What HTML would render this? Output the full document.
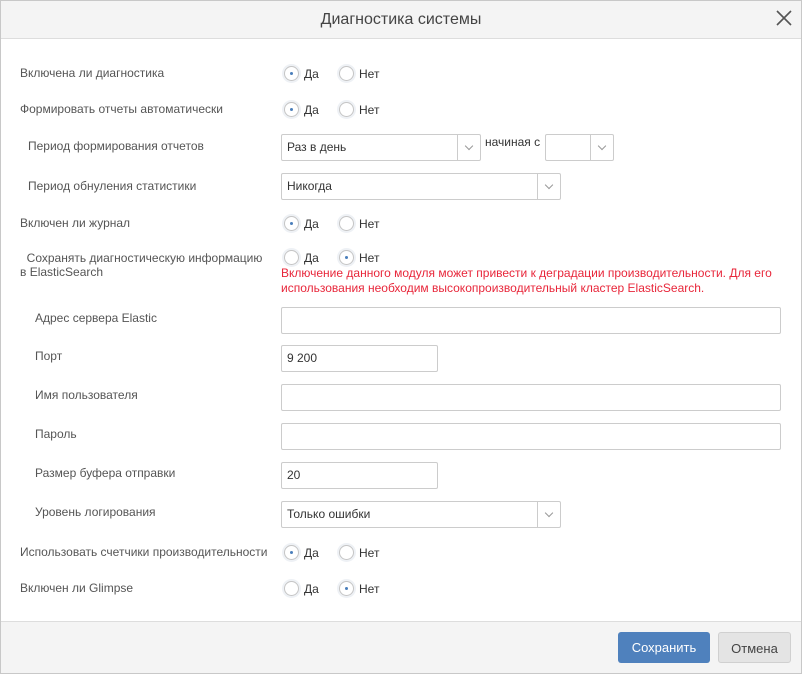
<!DOCTYPE html><html><head><meta charset="utf-8"><style>
*{box-sizing:border-box}body{margin:0;width:802px;height:674px;font-family:"Liberation Sans",sans-serif;font-size:12px;color:#333;background:#fff;position:relative;overflow:hidden}
.frame{position:absolute;left:0;top:0;width:802px;height:674px;border:1px solid #c8c8c8;z-index:5;pointer-events:none}
.hdr{position:absolute;left:0;top:0;width:802px;height:39px;background:#f4f4f4;border-bottom:1px solid #ddd;text-align:center;font-size:16px;line-height:39px;color:#444}
.ftr{position:absolute;left:0;top:621px;width:802px;height:53px;background:#f4f4f4;border-top:1px solid #ddd}
.l{position:absolute;color:#555;white-space:nowrap}
.r{position:absolute;width:15px;height:15px;border:1px solid #c5c5c5;border-radius:50%;background:#fff;box-shadow:0 0 0 2px #eef1f5}
.r.on::after{content:"";position:absolute;left:5px;top:5px;width:3px;height:3px;border-radius:50%;background:#4a7ebb}
.t{position:absolute;color:#333}
.in{position:absolute;border:1px solid #ccc;border-radius:2px;background:#fff;padding-left:5px;line-height:24px;color:#333}
.sel .ch{position:absolute;right:0;top:0;width:23px;height:100%;border-left:1px solid #ccc}
.sel .ch::after{content:"";position:absolute;left:8px;top:8px;width:5px;height:5px;border-right:1px solid #999;border-bottom:1px solid #999;transform:rotate(45deg)}
.btn{position:absolute;top:632px;height:31px;border-radius:3px;font-size:13px;line-height:31px;text-align:center}
</style></head><body>
<div class="frame"></div>
<div class="hdr">Диагностика системы</div>
<svg style="position:absolute;left:775px;top:9px" width="18" height="18" viewBox="0 0 18 18"><path d="M2 2L16 16M16 2L2 16" stroke="#555" stroke-width="1.6"/></svg>

<div class="l" style="left:20px;top:66px">Включена ли диагностика</div>
<div class="r on" style="left:284px;top:66px"></div><div class="t" style="left:304px;top:67px">Да</div>
<div class="r" style="left:339px;top:66px"></div><div class="t" style="left:359px;top:67px">Нет</div>

<div class="l" style="left:20px;top:102px">Формировать отчеты автоматически</div>
<div class="r on" style="left:284px;top:102px"></div><div class="t" style="left:304px;top:103px">Да</div>
<div class="r" style="left:339px;top:102px"></div><div class="t" style="left:359px;top:103px">Нет</div>

<div class="l" style="left:28px;top:139px">Период формирования отчетов</div>
<div class="in sel" style="left:281px;top:134px;width:200px;height:27px">Раз в день<span class="ch"></span></div>
<div class="t" style="left:485px;top:135px">начиная с</div>
<div class="in sel" style="left:545px;top:134px;width:69px;height:27px"><span class="ch"></span></div>

<div class="l" style="left:28px;top:179px">Период обнуления статистики</div>
<div class="in sel" style="left:281px;top:173px;width:280px;height:27px">Никогда<span class="ch"></span></div>

<div class="l" style="left:20px;top:216px">Включен ли журнал</div>
<div class="r on" style="left:284px;top:216px"></div><div class="t" style="left:304px;top:217px">Да</div>
<div class="r" style="left:339px;top:216px"></div><div class="t" style="left:359px;top:217px">Нет</div>

<div class="l" style="left:20px;top:251px;line-height:14px">&nbsp;&nbsp;Сохранять диагностическую информацию<br>в ElasticSearch</div>
<div class="r" style="left:284px;top:250px"></div><div class="t" style="left:304px;top:251px">Да</div>
<div class="r on" style="left:339px;top:250px"></div><div class="t" style="left:359px;top:251px">Нет</div>
<div class="t" style="left:281px;top:266px;color:#e8263a;line-height:15px;white-space:nowrap">Включение данного модуля может привести к деградации производительности. Для его<br>использования необходим высокопроизводительный кластер ElasticSearch.</div>

<div class="l" style="left:35px;top:311px">Адрес сервера Elastic</div>
<div class="in" style="left:281px;top:307px;width:500px;height:27px"></div>
<div class="l" style="left:35px;top:349px">Порт</div>
<div class="in" style="left:281px;top:345px;width:157px;height:27px">9 200</div>
<div class="l" style="left:35px;top:388px">Имя пользователя</div>
<div class="in" style="left:281px;top:384px;width:500px;height:27px"></div>
<div class="l" style="left:35px;top:427px">Пароль</div>
<div class="in" style="left:281px;top:423px;width:500px;height:27px"></div>
<div class="l" style="left:35px;top:466px">Размер буфера отправки</div>
<div class="in" style="left:281px;top:462px;width:157px;height:27px">20</div>
<div class="l" style="left:35px;top:505px">Уровень логирования</div>
<div class="in sel" style="left:281px;top:501px;width:280px;height:27px">Только ошибки<span class="ch"></span></div>

<div class="l" style="left:20px;top:545px">Использовать счетчики производительности</div>
<div class="r on" style="left:284px;top:545px"></div><div class="t" style="left:304px;top:546px">Да</div>
<div class="r" style="left:339px;top:545px"></div><div class="t" style="left:359px;top:546px">Нет</div>

<div class="l" style="left:20px;top:581px">Включен ли Glimpse</div>
<div class="r" style="left:284px;top:581px"></div><div class="t" style="left:304px;top:582px">Да</div>
<div class="r on" style="left:339px;top:581px"></div><div class="t" style="left:359px;top:582px">Нет</div>

<div class="ftr"></div>
<div class="btn" style="left:618px;width:92px;background:#4f81bd;color:#fff">Сохранить</div>
<div class="btn" style="left:718px;width:73px;background:#e4e4e4;border:1px solid #d0d0d0;color:#444">Отмена</div>
</body></html>
